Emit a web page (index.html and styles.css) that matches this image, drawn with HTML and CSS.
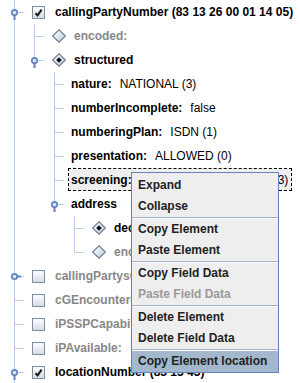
FILE: index.html
```html
<!doctype html>
<html>
<head>
  <meta charset="utf-8">
  <link rel="stylesheet" href="styles.css">
</head>
<body>
<svg class="defs" width="0" height="0">
  <defs>
    <linearGradient id="boxfill" x1="0" y1="0" x2="0" y2="1">
      <stop offset="0" stop-color="#ffffff"/>
      <stop offset="1" stop-color="#d3dbe5"/>
    </linearGradient>
    <linearGradient id="gemfill" x1="0" y1="0" x2="1" y2="1">
      <stop offset="0" stop-color="#ffffff"/>
      <stop offset="1" stop-color="#bccde0"/>
    </linearGradient>
    <symbol id="h-open" viewBox="0 0 28 24">
      <circle cx="14.5" cy="12.5" r="2.7" fill="#dde7f5" stroke="#6382bf" stroke-width="1.7"/>
      <line x1="14.5" y1="15" x2="14.5" y2="20" stroke="#6382bf" stroke-width="2"/>
    </symbol>
    <symbol id="h-shut" viewBox="0 0 28 24">
      <circle cx="14.5" cy="12.5" r="2.7" fill="#dde7f5" stroke="#6382bf" stroke-width="1.7"/>
      <line x1="17" y1="12.5" x2="21" y2="12.5" stroke="#6382bf" stroke-width="2"/>
    </symbol>
    <symbol id="cb" viewBox="0 0 13 13">
      <rect x="0.5" y="0.5" width="12" height="12" fill="url(#boxfill)" stroke="#7d8fa3"/>
    </symbol>
    <symbol id="gem" viewBox="0 0 14 14">
      <polygon points="7,0.7 13.3,7 7,13.3 0.7,7" fill="url(#gemfill)" stroke="#76889b" stroke-width="1.3"/>
    </symbol>
  </defs>
</svg>

<div class="tree">
  <!-- callingPartyNumber -->
  <div class="row">
    <span class="el"><svg class="hd"><use href="#h-open"/></svg></span>
    <span class="node"><svg class="ico" viewBox="0 0 13 13"><use href="#cb"/><path d="M3.5 7.2 L5.6 9.4 L9.6 3.6" fill="none" stroke="#1a1a1a" stroke-width="2"/></svg><b>callingPartyNumber (83 13 26 00 01 14 05)</b></span>
  </div>
  <div class="row">
    <span class="g v"></span><span class="el"></span>
    <span class="node"><svg class="ico gem" viewBox="0 0 14 14"><use href="#gem"/></svg><b class="off">encoded:</b></span>
  </div>
  <div class="row">
    <span class="g v"></span><span class="el last"><svg class="hd"><use href="#h-open"/></svg></span>
    <span class="node"><svg class="ico gem" viewBox="0 0 14 14"><use href="#gem"/><polygon points="7,4.2 9.8,7 7,9.8 4.2,7" fill="#111"/></svg><b>structured</b></span>
  </div>

  <!-- structured children -->
  <div class="row">
    <span class="g v"></span><span class="g"></span><span class="el"></span>
    <span class="node txt"><b>nature:</b><span class="val">NATIONAL (3)</span></span>
  </div>
  <div class="row">
    <span class="g v"></span><span class="g"></span><span class="el"></span>
    <span class="node txt"><b>numberIncomplete:</b><span class="val">false</span></span>
  </div>
  <div class="row">
    <span class="g v"></span><span class="g"></span><span class="el"></span>
    <span class="node txt"><b>numberingPlan:</b><span class="val">ISDN (1)</span></span>
  </div>
  <div class="row">
    <span class="g v"></span><span class="g"></span><span class="el"></span>
    <span class="node txt"><b>presentation:</b><span class="val">ALLOWED (0)</span></span>
  </div>
  <div class="row">
    <span class="g v"></span><span class="g"></span><span class="el"></span>
    <span class="node txt focus"><b>screening:</b><span class="val">NETWORK_PROVIDED (3)</span></span>
  </div>
  <div class="row">
    <span class="g v"></span><span class="g"></span><span class="el last"><svg class="hd"><use href="#h-open"/></svg></span>
    <span class="node txt"><b>address</b></span>
  </div>

  <!-- address children -->
  <div class="row">
    <span class="g v"></span><span class="g"></span><span class="g"></span><span class="el"></span>
    <span class="node"><svg class="ico gem" viewBox="0 0 14 14"><use href="#gem"/><polygon points="7,4.2 9.8,7 7,9.8 4.2,7" fill="#111"/></svg><b>decoded</b></span>
  </div>
  <div class="row">
    <span class="g v"></span><span class="g"></span><span class="g"></span><span class="el last"></span>
    <span class="node"><svg class="ico gem" viewBox="0 0 14 14"><use href="#gem"/></svg><b class="off">encoded:</b></span>
  </div>

  <!-- remaining top level -->
  <div class="row">
    <span class="el"><svg class="hd"><use href="#h-shut"/></svg></span>
    <span class="node"><svg class="ico" viewBox="0 0 13 13"><use href="#cb"/></svg><b class="off">callingPartysCategory:</b></span>
  </div>
  <div class="row">
    <span class="el"></span>
    <span class="node"><svg class="ico" viewBox="0 0 13 13"><use href="#cb"/></svg><b class="off">cGEncountered:</b></span>
  </div>
  <div class="row">
    <span class="el"></span>
    <span class="node"><svg class="ico" viewBox="0 0 13 13"><use href="#cb"/></svg><b class="off">iPSSPCapabilities:</b></span>
  </div>
  <div class="row">
    <span class="el"></span>
    <span class="node"><svg class="ico" viewBox="0 0 13 13"><use href="#cb"/></svg><b class="off">iPAvailable:</b></span>
  </div>
  <div class="row">
    <span class="el"><svg class="hd"><use href="#h-open"/></svg></span>
    <span class="node"><svg class="ico" viewBox="0 0 13 13"><use href="#cb"/><path d="M3.5 7.2 L5.6 9.4 L9.6 3.6" fill="none" stroke="#1a1a1a" stroke-width="2"/></svg><b>locationNumber (83 13 43)</b></span>
  </div>
</div>

<!-- right click menu -->
<ul class="popup">
  <li>Expand</li>
  <li>Collapse</li>
  <li class="sep"></li>
  <li>Copy Element</li>
  <li>Paste Element</li>
  <li class="sep"></li>
  <li>Copy Field Data</li>
  <li class="dis">Paste Field Data</li>
  <li class="sep"></li>
  <li>Delete Element</li>
  <li>Delete Field Data</li>
  <li class="sep"></li>
  <li class="hot">Copy Element location</li>
</ul>
</body>
</html>
```

FILE: styles.css
```css
body {
  margin: 0;
  background: #ffffff;
  font-family: "Liberation Sans", Arial, sans-serif;
  font-size: 12px;
  color: #000;
  overflow: hidden;
  position: relative;
  height: 383px;
}
.defs {
  position: absolute;
  width: 0;
  height: 0;
}

/* Tree */
.tree {
  --line: #b8cfe5;
}
.row {
  display: flex;
  height: 24px;
  align-items: stretch;
  white-space: nowrap;
}
.g {
  width: 20px;
  flex: none;
}
.g.v {
  background: linear-gradient(var(--line), var(--line)) 14px 0 / 1px 100% no-repeat;
}
.el { /* elbow: vertical + horizontal connector */
  width: 28px;
  flex: none;
  display: block;
  background:
    linear-gradient(var(--line), var(--line)) 14px 0 / 1px 100% no-repeat,
    linear-gradient(var(--line), var(--line)) 14px 12px / 10px 1px no-repeat;
}
.el.last {
  background:
    linear-gradient(var(--line), var(--line)) 14px 0 / 1px 13px no-repeat,
    linear-gradient(var(--line), var(--line)) 14px 12px / 10px 1px no-repeat;
}
.hd {
  width: 28px;
  height: 24px;
  display: block;
}
.node {
  display: flex;
  align-items: center;
  gap: 10px;
  padding-left: 4px;
}
.ico {
  width: 13px;
  height: 13px;
  flex: none;
}
.ico.gem {
  width: 14px;
  height: 14px;
  margin-right: -2px;
}
.node b {
  font-weight: bold;
}
.off {
  color: #878787;
}
.val {
  font-weight: normal;
  margin-left: 8px;
}
.node.txt {
  gap: 0;
  padding-left: 3px;
}
.node.focus {
  height: 23px;
  padding: 0 3px 0 2px;
  border: 1px dashed #000;
  background: #eeeeee;
  box-sizing: border-box;
}

/* Popup menu */
.popup {
  position: absolute;
  left: 131px;
  top: 172px;
  width: 146px;
  margin: 0;
  padding: 2px 0 0 0;
  list-style: none;
  background: #eeeeee;
  border: 1px solid #6382bf;
}
.popup li {
  height: 21px;
  line-height: 21px;
  padding-left: 6px;
  font-weight: bold;
  color: #222;
}
.popup li.sep {
  height: 1px;
  border-top: 1px solid #a3b3c6;
  background: #ffffff;
  padding: 0;
}
.popup li.dis {
  color: #9a9a9a;
}
.popup li.hot {
  background: #a3b8cc;
}
```
